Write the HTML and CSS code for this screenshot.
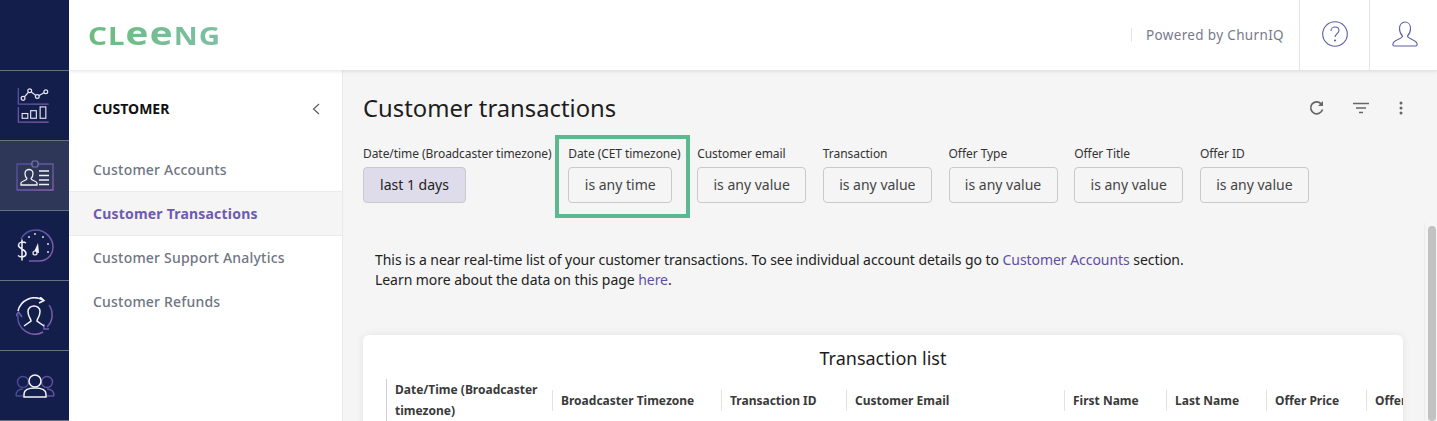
FILE: index.html
```html
<!DOCTYPE html>
<html lang="en">
<head>
    <meta charset="UTF-8">
    <title>Customer transactions</title>
    <link rel="stylesheet" href="styles.css">
</head>
<body>
    <svg class="defs" width="0" height="0">
        <defs>
            <linearGradient id="rail-grad" x1="0" y1="0" x2="1" y2="1">
                <stop offset="0" stop-color="#4d4f9c"/>
                <stop offset="1" stop-color="#8a5fb0"/>
            </linearGradient>
        </defs>
    </svg>

    <nav class="rail">
        <div class="rail-cell"></div>
        <div class="rail-cell">
            <svg class="rail-chart" width="33" height="36" viewBox="0 0 34 38" fill="none">
                <path d="M1 1V18H33M1 21V37H33" stroke="url(#rail-grad)" stroke-width="1.4"/>
                <path d="M6 12L13 4L21 10L30 5" stroke="#e4e4f2" stroke-width="1.3"/>
                <circle cx="6" cy="12" r="2" fill="#141e4b" stroke="#e4e4f2" stroke-width="1.3"/>
                <circle cx="13" cy="4" r="2" fill="#141e4b" stroke="#e4e4f2" stroke-width="1.3"/>
                <circle cx="21" cy="10" r="2" fill="#141e4b" stroke="#e4e4f2" stroke-width="1.3"/>
                <circle cx="30" cy="5" r="2" fill="#141e4b" stroke="#e4e4f2" stroke-width="1.3"/>
                <rect x="5" y="28" width="6" height="5" stroke="#e4e4f2" stroke-width="1.2"/>
                <rect x="14" y="25" width="6" height="8" stroke="#e4e4f2" stroke-width="1.2"/>
                <rect x="24" y="21" width="6" height="12" stroke="#e4e4f2" stroke-width="1.2"/>
            </svg>
        </div>
        <div class="rail-cell rail-cell-active">
            <svg width="38" height="32" viewBox="0 0 38 32" fill="none">
                <path d="M16 4H1V30H37V4H22" stroke="url(#rail-grad)" stroke-width="1.3"/>
                <rect x="16" y="1" width="6" height="6" rx="1.5" stroke="#7d78b8" stroke-width="1.2"/>
                <path d="M5 25V23C5 21 11 20.500 11 18.500C9 17 9 14.500 9 13.500C9 11 11 9.500 13 9.500C15 9.500 17 11 17 13.500C17 14.500 17 17 15 18.500C15 20.500 21 21 21 23V25Z" stroke="#f2f2f8" stroke-width="1.3"/>
                <path d="M23 11H33M23 15.500H33M23 20H33M23 24.500H33" stroke="#f2f2f8" stroke-width="1.3"/>
            </svg>
        </div>
        <div class="rail-cell">
            <svg width="38" height="36" viewBox="0 0 38 36" fill="none">
                <path d="M5 11A17 17 0 0 1 20 2C29 2 37 10 37 19C37 27 31 33 23 33H13" stroke="url(#rail-grad)" stroke-width="1.5"/>
                <path d="M10 15C7 13 3 14 2.500 17C2 21 10 21 10 25.500C10 29 5 30 2 27.500M6 11.500V32.500" stroke="#f4f4fa" stroke-width="1.5"/>
                <path d="M18 24L22 15L23 25Z" fill="#f4f4fa"/>
                <circle cx="19" cy="25" r="2" fill="#141e4b" stroke="#f4f4fa" stroke-width="1.2"/>
                <circle cx="19" cy="6" r="1" fill="#dcdcec"/>
                <circle cx="27" cy="9" r="1" fill="#dcdcec"/>
                <circle cx="13" cy="9" r="1" fill="#dcdcec"/>
                <circle cx="32" cy="16" r="1" fill="#dcdcec"/>
                <circle cx="32" cy="24" r="1" fill="#dcdcec"/>
            </svg>
        </div>
        <div class="rail-cell">
            <svg width="38" height="38" viewBox="0 0 38 38" fill="none">
                <path d="M2 14A17 17 0 0 1 27 3" stroke="#f4f4fa" stroke-width="1.5"/>
                <path d="M24 0L28 3.500L23 6" stroke="#f4f4fa" stroke-width="1.5"/>
                <path d="M33 8A17 17 0 0 1 31 30" stroke="url(#rail-grad)" stroke-width="1.5"/>
                <path d="M28 27V32H33" stroke="#6f62ae" stroke-width="1.5"/>
                <path d="M27 35A17 17 0 0 1 2 18" stroke="url(#rail-grad)" stroke-width="1.5"/>
                <path d="M-1 20L2.500 15L6 20" stroke="#6f62ae" stroke-width="1.5"/>
                <path d="M8 29L15 24C15 21.500 12 20 12 14.500C12 11 15 9 18 9C21 9 24 11 24 14.500C24 20 21 21.500 21 24L28 29" stroke="#f4f4fa" stroke-width="1.5"/>
            </svg>
        </div>
        <div class="rail-cell">
            <svg width="40" height="24" viewBox="0 0 40 24" fill="none">
                <circle cx="8" cy="8" r="5.500" stroke="#4a4a98" stroke-width="1.4"/>
                <path d="M1 22C1 17 3 15 8 15M1 22H8" stroke="#4a4a98" stroke-width="1.400"/>
                <circle cx="32" cy="8" r="5.500" stroke="#62509c" stroke-width="1.400"/>
                <path d="M39 22C39 17 37 15 32 15M39 22H32" stroke="#62509c" stroke-width="1.400"/>
                <circle cx="20" cy="7" r="6" fill="#141e4b" stroke="#f4f4fa" stroke-width="1.500"/>
                <path d="M9 23V20C9 16 13 14 20 14C27 14 31 16 31 20V23Z" fill="#141e4b" stroke="#f4f4fa" stroke-width="1.500"/>
            </svg>
        </div>
    </nav>

    <div class="page">
        <header class="topbar">
            <div class="logo">CL<span class="logo-e">ee</span>NG</div>
            <div class="powered">Powered by ChurnIQ</div>
            <div class="topbar-btn">
                <svg width="26" height="26" viewBox="0 0 26 26" fill="none" stroke="#5b5ea8" stroke-width="1.100">
                    <circle cx="13" cy="13" r="12.300"/>
                    <path d="M9 10C9 7.500 11 6 13 6C15.500 6 17 7.600 17 9.600C17 12.500 13 13 13 16"/>
                    <circle cx="13" cy="19.500" r="0.500"/>
                </svg>
            </div>
            <div class="topbar-btn topbar-btn-last">
                <svg width="26" height="26" viewBox="0 0 26 26" fill="none" stroke="#5b5ea8" stroke-width="1.100">
                    <path d="M7.500 7.500C7.500 3.500 10 1 13 1C16 1 18.500 3.500 18.500 7.500C18.500 11 17 13.500 15.500 15C15.500 18 24 18.500 25 22.500C25.500 24 25 25 23.500 25H2.500C1 25 .5 24 1 22.500C2 18.500 10.500 18 10.500 15C9 13.500 7.500 11 7.500 7.500Z"/>
                </svg>
            </div>
        </header>

        <div class="body-row">
            <aside class="side">
                <div class="side-head">
                    <span class="side-title">CUSTOMER</span>
                    <svg width="8" height="12" viewBox="0 0 8 12" fill="none" stroke="#555" stroke-width="1.100"><path d="M7 1L1.500 6L7 11"/></svg>
                </div>
                <a class="side-item side-item-first">Customer Accounts</a>
                <a class="side-item side-item-active">Customer Transactions</a>
                <a class="side-item">Customer Support Analytics</a>
                <a class="side-item">Customer Refunds</a>
            </aside>

            <main class="main">
                <div class="content">
                    <div class="title-row">
                        <h1 class="title">Customer transactions</h1>
                        <div class="tools">
                            <svg class="tool-refresh" width="16" height="16" viewBox="0 0 16 16" fill="none" stroke="#666" stroke-width="1.700">
                                <path d="M13.500 9.500A6 6 0 1 1 12 3.600"/>
                                <path d="M14 1V6H9" fill="#666" stroke="none"/>
                            </svg>
                            <svg width="16" height="12" viewBox="0 0 16 12" fill="none" stroke="#666" stroke-width="1.400">
                                <path d="M0 1.500H16M3 6H13M6 10.500H10"/>
                            </svg>
                            <svg width="4" height="14" viewBox="0 0 4 14" fill="#666">
                                <circle cx="2" cy="2" r="1.500"/><circle cx="2" cy="7" r="1.500"/><circle cx="2" cy="12" r="1.500"/>
                            </svg>
                        </div>
                    </div>

                    <div class="filters">
                        <div class="filter">
                            <label>Date/time (Broadcaster timezone)</label>
                            <div class="filter-btn filter-btn-on">last 1 days</div>
                        </div>
                        <div class="filter filter-marked">
                            <label>Date (CET timezone)</label>
                            <div class="filter-btn filter-btn-time">is any time</div>
                        </div>
                        <div class="filter">
                            <label>Customer email</label>
                            <div class="filter-btn">is any value</div>
                        </div>
                        <div class="filter">
                            <label>Transaction</label>
                            <div class="filter-btn">is any value</div>
                        </div>
                        <div class="filter">
                            <label>Offer Type</label>
                            <div class="filter-btn">is any value</div>
                        </div>
                        <div class="filter">
                            <label>Offer Title</label>
                            <div class="filter-btn">is any value</div>
                        </div>
                        <div class="filter">
                            <label>Offer ID</label>
                            <div class="filter-btn">is any value</div>
                        </div>
                    </div>

                    <p class="intro">
                        This is a near real-time list of your customer transactions. To see individual account details go to <a>Customer Accounts</a> section.<br>
                        Learn more about the data on this page <a>here</a>.
                    </p>

                    <section class="card">
                        <h2 class="card-title">Transaction list</h2>
                        <div class="cols">
                            <div class="col col-date"><span>Date/Time (Broadcaster timezone)</span></div>
                            <div class="col col-tz"><span>Broadcaster Timezone</span></div>
                            <div class="col col-id"><span>Transaction ID</span></div>
                            <div class="col col-email"><span>Customer Email</span></div>
                            <div class="col col-first"><span>First Name</span></div>
                            <div class="col col-last"><span>Last Name</span></div>
                            <div class="col col-price"><span>Offer Price</span></div>
                            <div class="col col-offer"><span>Offer Title</span></div>
                        </div>
                    </section>
                </div>
                <div class="scroll-col"><div class="scroll-thumb"></div></div>
            </main>
        </div>
    </div>
</body>
</html>
```

FILE: styles.css
```css
* {
    box-sizing: border-box;
}
html, body {
    height: 421px;
    overflow: hidden;
}
body {
    margin: 0;
    display: flex;
    font-family: "Noto Sans", Arial, sans-serif;
    color: #222;
    background-color: #f5f5f5;
}
.defs {
    position: absolute;
}

/* left rail */
.rail {
    width: 69px;
    flex-shrink: 0;
    background-color: #141e4b;
}
.rail-cell {
    height: 70px;
    display: flex;
    align-items: center;
    justify-content: center;
    border-bottom: 1px solid #67727f;
}
.rail-cell:first-child {
    height: 71px;
}
.rail-cell-active {
    background-color: #2f3759;
}
.rail-chart {
    margin: 0 3px 2px 0;
}

.page {
    flex: 1;
    min-width: 0;
    display: flex;
    flex-direction: column;
}

/* top bar */
.topbar {
    height: 70px;
    flex-shrink: 0;
    display: flex;
    align-items: center;
    background-color: #fff;
    box-shadow: 0 1px 4px rgba(0, 0, 0, 0.12);
    position: relative;
}
.logo {
    margin-left: 19px;
    margin-right: auto;
    margin-bottom: 6px;
    font-size: 25px;
    font-weight: 700;
    line-height: 1;
    letter-spacing: 0.800px;
    transform: scaleX(1.18);
    transform-origin: left center;
    background: linear-gradient(90deg, #6dbb7d, #7cbfa6);
    -webkit-background-clip: text;
    background-clip: text;
    color: transparent;
}
.logo-e {
    font-size: 33px;
}
.powered {
    font-size: 13.500px;
    letter-spacing: 0.350px;
    color: #787a8a;
    line-height: 14px;
    border-left: 1px solid #e4e4e4;
    padding-left: 14px;
    padding-right: 15px;
}
.topbar-btn {
    width: 70px;
    height: 70px;
    display: flex;
    align-items: center;
    justify-content: center;
    border-left: 1px solid #e4e4e4;
    padding-bottom: 3px;
}
.topbar-btn-last {
    width: 68px;
    padding-left: 2px;
}

.body-row {
    flex: 1;
    min-height: 0;
    display: flex;
}

/* side menu */
.side {
    width: 274px;
    flex-shrink: 0;
    background-color: #fff;
    border-right: 1px solid #e8e8e8;
}
.side-head {
    height: 77px;
    padding: 0 22px 0 24px;
    display: flex;
    align-items: center;
    justify-content: space-between;
}
.side-title {
    font-size: 14px;
    font-weight: 700;
    color: #111;
}
.side-item {
    display: block;
    height: 44px;
    line-height: 43px;
    padding-left: 24px;
    font-size: 14px;
    font-weight: 500;
    letter-spacing: 0.200px;
    color: #6f7583;
}
.side-item-first {
    line-height: 45px;
}
.side-item-active {
    height: 45px;
    line-height: 44px;
    font-weight: 700;
    color: #6e5bb0;
    background-color: #f5f5f5;
    border-top: 1px solid #ececec;
    border-bottom: 1px solid #ececec;
}

/* main area */
.main {
    flex: 1;
    min-width: 0;
    display: flex;
}
.content {
    flex: 1;
    min-width: 0;
    padding: 21px 21px 0 20px;
}
.title-row {
    display: flex;
    align-items: center;
    justify-content: space-between;
    height: 34px;
}
.title {
    margin: 0;
    font-size: 23.800px;
    font-weight: 400;
    color: #1d1d1d;
}
.tools {
    display: flex;
    align-items: center;
    gap: 30px;
}
.tool-refresh {
    margin-right: -2px;
}
.filters {
    display: flex;
    gap: 16.700px;
    margin-top: 21px;
}
.filter label {
    display: block;
    font-size: 12px;
    letter-spacing: -0.060px;
    line-height: 16px;
    white-space: nowrap;
    color: #333;
}
.filter-btn {
    margin-top: 5px;
    width: 109px;
    height: 36px;
    line-height: 34px;
    text-align: center;
    font-size: 14px;
    color: #444;
    border: 1px solid #c9c9c9;
    border-radius: 4px;
}
.filter-btn-on {
    width: 103px;
    color: #222;
    background-color: #dedcea;
}
.filter-btn-time {
    width: 104px;
}
.filter-marked {
    position: relative;
}
.filter-marked::after {
    content: "";
    position: absolute;
    top: -11px;
    right: -10px;
    bottom: -15px;
    left: -13px;
    border: 4px solid #5cb88f;
}
.intro {
    margin: 47px 0 0 12px;
    font-size: 14px;
    letter-spacing: -0.055px;
    line-height: 20px;
    color: #222;
}
.intro a {
    color: #5f4ea6;
}

/* table card */
.card {
    margin-top: 45px;
    height: 100px;
    background-color: #fff;
    border-radius: 6px;
    box-shadow: 0 0 8px rgba(0, 0, 0, 0.08);
    overflow: hidden;
}
.card-title {
    margin: 0;
    padding-top: 10px;
    text-align: center;
    font-size: 18px;
    font-weight: 400;
    line-height: 26px;
    color: #1d1d1d;
}
.cols {
    margin: 8px 0 0 23px;
    display: flex;
    align-items: center;
    white-space: nowrap;
}
.col {
    flex-shrink: 0;
    padding-left: 8px;
    border-left: 1px solid #e2e2e2;
    font-size: 12px;
    font-weight: 700;
    letter-spacing: 0;
    line-height: 21px;
    color: #3a3a3a;
}
.col-date {
    width: 166px;
    white-space: normal;
    border-left-color: #cfcfcf;
}
.col-tz { width: 169px; }
.col-id { width: 125px; }
.col-email { width: 218px; }
.col-first { width: 102px; }
.col-last { width: 100px; }
.col-price { width: 100px; }
.col-offer { width: 100px; }

/* scrollbar */
.scroll-col {
    width: 13px;
    flex-shrink: 0;
    margin-top: 153px;
    padding: 3px 1px 0 3px;
    border-left: 1px solid #ececec;
}
.scroll-thumb {
    height: 100%;
    border-radius: 5px;
    background-color: #c2c2c2;
}
```
